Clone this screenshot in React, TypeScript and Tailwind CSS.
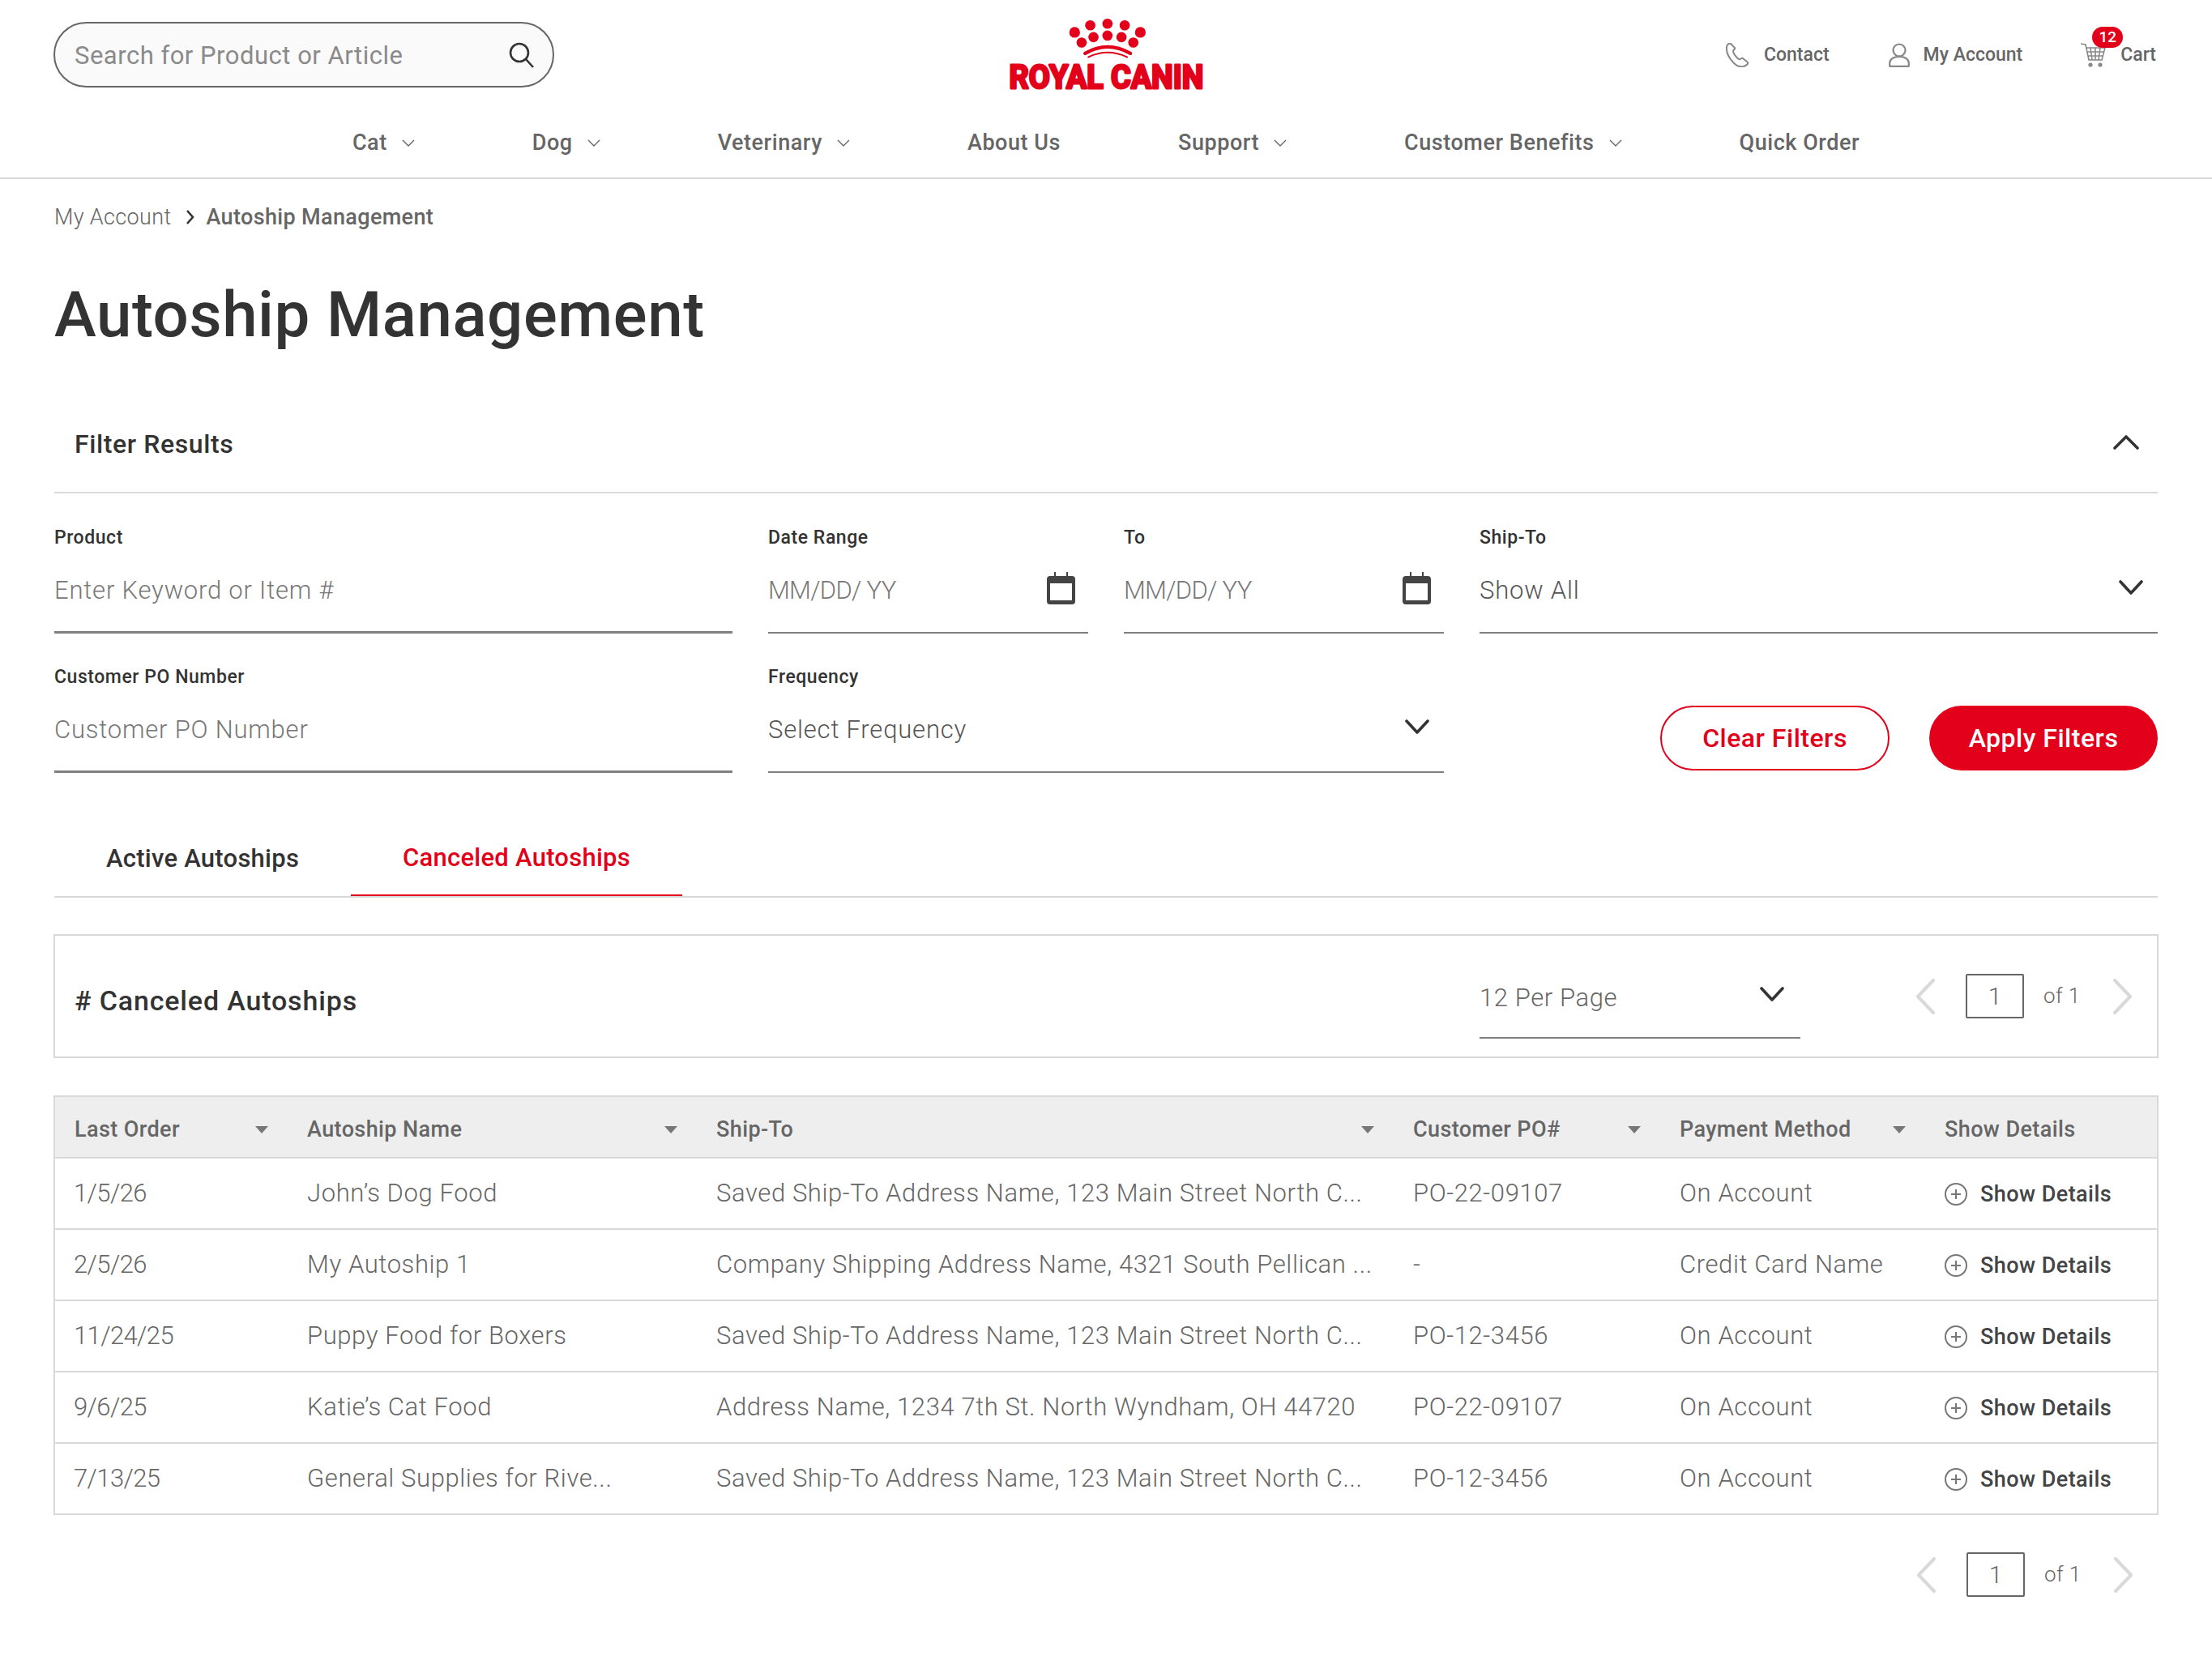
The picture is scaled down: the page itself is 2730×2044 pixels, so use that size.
import React from "react";

const Chev = ({ className }: { className: string }) => (
  <svg viewBox="0 0 30 18" className={className} fill="none" stroke="#333" strokeWidth="3.6" strokeLinecap="round" strokeLinejoin="round">
    <path d="M2 2l13 14L28 2" />
  </svg>
);
const NavChev = () => (
  <svg viewBox="0 0 16 10" className="w-[16px] h-[10px] ml-[18px] mt-[2px]" fill="none" stroke="#666" strokeWidth="1.4">
    <path d="M1 1l7 7 7-7" />
  </svg>
);
const Cal = () => (
  <svg viewBox="0 0 35 40" className="w-[35px] h-[40px]">
    <path d="M9 0h2v6H9zM24 0h2v6h-2z" fill="#444" />
    <rect x="0" y="5" width="35" height="35" rx="4" fill="#444" />
    <rect x="4" y="14" width="27" height="21" fill="#fff" />
  </svg>
);

const Logo = () => (
  <svg viewBox="280 60 740 280" className="ml-[5px] w-[247px] h-[93px] mt-[20px] overflow-visible">
    {[[529,120,20],[587,94,19],[651,88,19],[715,94,19],[773,120,20],[555,158,19],[599,138,19],[651,132,19],[703,138,19],[747,158,19]].map(([x,y,r]) => (
      <circle key={`${x}-${y}`} cx={x} cy={y} r={r} fill="#e2001a" />
    ))}
    <path d="M568 198Q651 150 736 198" fill="none" stroke="#e2001a" strokeWidth="13" strokeLinecap="round" />
    <path d="M580 212Q651 178 724 212" fill="none" stroke="#e2001a" strokeWidth="6" strokeLinecap="round" />
    <text x="286" y="328" textLength="722" lengthAdjust="spacingAndGlyphs" fontFamily="Roboto, sans-serif" fontWeight="700" fontSize="122" fill="#e2001a" stroke="#e2001a" strokeWidth="9" strokeLinejoin="round">ROYAL CANIN</text>
  </svg>
);

const Pager = () => (
  <div className="flex items-center">
    <svg viewBox="0 0 24 44" className="w-[24px] h-[44px]" fill="none" stroke="#d9d9d9" strokeWidth="4" strokeLinecap="round" strokeLinejoin="round"><path d="M22 2L3 22l19 20" /></svg>
    <div className="ml-[38px] w-[72px] h-[55px] border-2 border-[#666] rounded-[2px] flex items-center justify-center text-[30px] text-[#666] font-light">1</div>
    <div className="ml-[24px] w-[44px] text-[26px] text-[#666] font-light tracking-[0.4px] whitespace-nowrap">of 1</div>
    <svg viewBox="0 0 24 44" className="ml-[42px] w-[24px] h-[44px]" fill="none" stroke="#d9d9d9" strokeWidth="4" strokeLinecap="round" strokeLinejoin="round"><path d="M2 2l19 20L2 42" /></svg>
  </div>
);

const nav: [string, boolean][] = [["Cat",true],["Dog",true],["Veterinary",true],["About Us",false],["Support",true],["Customer Benefits",true],["Quick Order",false]];

const rows = [
  ["1/5/26","John’s Dog Food","Saved Ship-To Address Name, 123 Main Street North C...","PO-22-09107","On Account"],
  ["2/5/26","My Autoship 1","Company Shipping Address Name, 4321 South Pellican ...","-","Credit Card Name"],
  ["11/24/25","Puppy Food for Boxers","Saved Ship-To Address Name, 123 Main Street North C...","PO-12-3456","On Account"],
  ["9/6/25","Katie’s Cat Food","Address Name, 1234 7th St. North Wyndham, OH 44720","PO-22-09107","On Account"],
  ["7/13/25","General Supplies for Rive...","Saved Ship-To Address Name, 123 Main Street North C...","PO-12-3456","On Account"],
];
const heads = ["Last Order","Autoship Name","Ship-To","Customer PO#","Payment Method"];
const cols = "grid grid-cols-[287px_505px_860px_329px_327px_1fr]";

const Label = ({ children }: { children: React.ReactNode }) => (
  <div className="h-[30px] leading-[30px] text-[23px] font-medium text-[#333] tracking-[0.55px]">{children}</div>
);

export default function App() {
  return (
    <div className="w-[2730px] min-h-[2044px] bg-white font-['Roboto',sans-serif] text-[#666]">
      <header className="border-b-2 border-[#d9d9d9] h-[221px]">
        <div className="grid grid-cols-[1fr_auto_1fr] h-[108px] pl-[66px] pr-[69px]">
          <div className="mt-[27px] w-[618px] h-[81px] rounded-full border-2 border-[#666] bg-[#fafafa] flex items-center justify-between pl-[24px] pr-[22px]">
            <span className="pt-[3px] text-[31px] text-[#8a8a8a] tracking-[0.5px]">Search for Product or Article</span>
            <svg viewBox="0 0 32 32" className="w-[32px] h-[32px]" fill="none" stroke="#333" strokeWidth="2.6"><circle cx="13" cy="13" r="11" /><path d="M21 21l9 10" /></svg>
          </div>
          <Logo />
          <div className="mt-[52px] h-[32px] flex items-center justify-end text-[23px] font-medium tracking-[0px]">
            <svg viewBox="0 0 30 30" className="w-[30px] h-[30px]" fill="none" stroke="#888" strokeWidth="2" strokeLinejoin="round"><path d="M2 5c-1 8 4 15 9 20 3 3 7 5 12 4 3-1 6-3 5-5l-6-5c-2-1-3 2-5 1-3-2-7-7-7-10 0-2 3-2 2-4L7 1C5 0 2 2 2 5z" /></svg>
            <span className="ml-[18px]">Contact</span>
            <svg viewBox="0 0 26 30" className="ml-[73px] w-[26px] h-[30px]" fill="none" stroke="#888" strokeWidth="2.2"><circle cx="13" cy="9" r="7.5" /><path d="M1.2 28.8v-4c0-4 4-8 11.8-8s11.800 4 11.800 8v4z" strokeLinejoin="round" /></svg>
            <span className="ml-[17px]">My Account</span>
            <div className="relative ml-[72px] w-[31px] h-[30px]">
              <svg viewBox="0 0 31 30" className="w-[31px] h-[30px]" fill="none" stroke="#888" strokeWidth="1.6"><path d="M0 1l6 1 4 19h16l4-15H7M12 6l2 15M18 6v15M24 6l-2 15M8 11h21M9 16h19" /><circle cx="12" cy="27" r="1.800" fill="#888" /><circle cx="24" cy="27" r="1.800" fill="#888" /></svg>
              <div className="absolute left-[14px] top-[-20px] w-[38px] h-[26px] rounded-full bg-[#e2001a] text-white text-[19px] font-medium flex items-center justify-center">12</div>
            </div>
            <span className="ml-[18px]">Cart</span>
          </div>
        </div>
        <nav className="mt-[45px] h-[46px] flex items-center justify-center gap-[145px] text-[27px] font-medium tracking-[0.55px]">
          {nav.map(([t, c]) => (
            <div key={t} className="flex items-center whitespace-nowrap">
              <span>{t}</span>
              {c && <NavChev />}
            </div>
          ))}
        </nav>
      </header>

      <main className="px-[67px]">
        <div className="mt-[30px] h-[34px] flex items-center text-[27px] tracking-[0.35px]">
          <span className="font-light">My Account</span>
          <svg viewBox="0 0 12 18" className="ml-[17px] mr-[14px] w-[12px] h-[18px]" fill="none" stroke="#333" strokeWidth="2.6"><path d="M2 1l7 8-7 8" /></svg>
          <span className="font-medium">Autoship Management</span>
        </div>
        <h1 className="mt-[56px] h-[96px] leading-[96px] text-[78px] font-medium text-[#333] tracking-[0.6px]">Autoship Management</h1>

        <div className="mt-[79px] h-[64px] flex items-center justify-between pl-[25px] pr-[23px] text-[32px] font-medium text-[#333] tracking-[0.6px]">
          <span>Filter Results</span>
          <svg viewBox="0 0 32 18" className="-mt-[5px] w-[32px] h-[18px]" fill="none" stroke="#333" strokeWidth="3.6" strokeLinecap="round" strokeLinejoin="round"><path d="M2 16L16 2l14 14" /></svg>
        </div>
        <div className="mt-[27px] border-b-2 border-[#d9d9d9]" />

        <div className="mt-[40px] grid grid-cols-[837px_395px_395px_837px] gap-x-[44px] gap-y-[39px] text-[31px] font-light text-[#777] tracking-[0.8px]">
          <div>
            <Label>Product</Label>
            <div className="h-[103px] pt-[30px] border-b-[3px] border-[#7f7f7f] leading-[40px]">Enter Keyword or Item #</div>
          </div>
          <div>
            <Label>Date Range</Label>
            <div className="h-[103px] border-b-2 border-[#7f7f7f] flex items-start justify-between pt-[27px] pr-[16px]"><span className="mt-[3px] leading-[40px] tracking-[-0.7px]">MM/DD/ YY</span><Cal /></div>
          </div>
          <div>
            <Label>To</Label>
            <div className="h-[103px] border-b-2 border-[#7f7f7f] flex items-start justify-between pt-[27px] pr-[16px]"><span className="mt-[3px] leading-[40px] tracking-[-0.7px]">MM/DD/ YY</span><Cal /></div>
          </div>
          <div>
            <Label>Ship-To</Label>
            <div className="h-[103px] border-b-2 border-[#7f7f7f] flex items-start justify-between pt-[30px] pr-[18px] text-[#555]"><span className="leading-[40px]">Show All</span><Chev className="w-[30px] h-[18px] mt-[7px]" /></div>
          </div>
          <div>
            <Label>Customer PO Number</Label>
            <div className="h-[103px] pt-[30px] border-b-[3px] border-[#7f7f7f] leading-[40px]">Customer PO Number</div>
          </div>
          <div className="col-span-2">
            <Label>Frequency</Label>
            <div className="h-[103px] border-b-2 border-[#7f7f7f] flex items-start justify-between pt-[30px] pr-[18px] text-[#555]"><span className="leading-[40px]">Select Frequency</span><Chev className="w-[30px] h-[18px] mt-[7px]" /></div>
          </div>
          <div className="flex justify-end items-end gap-[49px] pb-[3px]">
            <button className="w-[283px] h-[80px] rounded-full border-2 border-[#e2001a] text-[#e2001a] text-[32px] font-medium bg-white tracking-[0.5px]">Clear Filters</button>
            <button className="w-[282px] h-[80px] rounded-full bg-[#e2001a] text-white text-[32px] font-medium tracking-[0.5px]">Apply Filters</button>
          </div>
        </div>

        <div className="mt-[60px] flex border-b-2 border-[#d9d9d9] text-[31px] font-medium tracking-[0.25px]">
          <div className="h-[92px] px-[64px] flex items-center text-[#333]">Active Autoships</div>
          <div className="h-[92px] px-[64px] flex items-center text-[#e2001a] border-b-2 border-[#e2001a] -mb-[2px]">Canceled Autoships</div>
        </div>

        <div className="mt-[45px] -mx-[1px] h-[153px] border-2 border-[#d9d9d9] flex items-center pl-[24px] pr-[30px]">
          <span className="pt-[12px] text-[34px] font-medium text-[#333] tracking-[0.85px]">#&nbsp;Canceled Autoships</span>
          <div className="ml-auto mr-[142px] w-[396px] h-[75px] self-end mb-[22px] border-b-2 border-[#7f7f7f] flex items-start justify-between pr-[20px] text-[31px] font-light tracking-[0.6px]">
            <span className="leading-[40px] mt-[5px]">12 Per Page</span>
            <Chev className="w-[30px] h-[18px] mt-[11px]" />
          </div>
          <Pager />
        </div>

        <div className="mt-[46px] -mx-[1px] border-2 border-[#d9d9d9]">
          <div className={`${cols} h-[74px] pt-[6px] bg-[#eeeeee] items-center text-[27px] tracking-[0.4px] font-medium`}>
            {heads.map((h) => (
              <div key={h} className="pl-[24px] pr-[24px] flex items-center justify-between whitespace-nowrap">
                <span>{h}</span>
                <svg viewBox="0 0 16 9" className="w-[16px] h-[9px]"><path d="M0 0h16L8 9z" fill="#777" /></svg>
              </div>
            ))}
            <div className="pl-[24px] whitespace-nowrap">Show Details</div>
          </div>
          {rows.map((r, i) => (
            <div key={i} className={`${cols} h-[88px] items-center border-t-2 border-[#d9d9d9] first:border-t-0 text-[31px] tracking-[0.6px] font-light`}>
              {r.map((c, j) => (
                <div key={j} className={j === 0 ? "pl-[23px] whitespace-nowrap tracking-[-0.6px]" : "pl-[24px] whitespace-nowrap"}>{c}</div>
              ))}
              <div className="pl-[24px] pt-[2px] flex items-center">
                <svg viewBox="0 0 28 28" className="w-[28px] h-[28px]" fill="none" stroke="#777" strokeWidth="2"><circle cx="14" cy="14" r="13" /><path d="M14 8v12M8 14h12" /></svg>
                <span className="ml-[16px] text-[27px] font-medium text-[#444] tracking-[0.45px] whitespace-nowrap">Show Details</span>
              </div>
            </div>
          ))}
        </div>

        <div className="mt-[46px] pr-[30px] flex justify-end"><Pager /></div>
      </main>
    </div>
  );
}
